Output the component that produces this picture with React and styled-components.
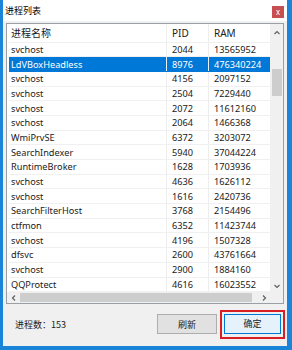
import React from "react";
import styled, { createGlobalStyle } from "styled-components";

const GlobalStyle = createGlobalStyle`
  html, body {
    margin: 0;
    padding: 0;
    background: #1a84d8;
  }
  body {
    font-family: "Noto Sans", "Noto Sans CJK SC", sans-serif;
  }
`;

const Window = styled.div`
  margin-left: 3px;
  width: 284px;
  height: 346px;
  background: #f0f0f0;
  display: flex;
  flex-direction: column;
  box-sizing: border-box;
`;

const TitleBar = styled.div`
  height: 21px;
  background: #ffffff;
  display: flex;
  align-items: center;
  justify-content: space-between;
  padding-left: 2px;
  padding-right: 3px;
  font-family: "Noto Sans CJK SC", sans-serif;
  font-size: 9px;
  color: #000;
`;

const CloseButton = styled.div`
  width: 12px;
  height: 12px;
  margin-top: 3px;
  background: #c74f4f;
  color: #fff;
  font-size: 8px;
  line-height: 11px;
  text-align: center;
`;

const Body = styled.div`
  padding: 2px 3px 0 3px;
`;

const ListFrame = styled.div`
  height: 281px;
  border: 1px solid #9a9fa6;
  background: #fff;
  display: grid;
  grid-template-columns: 1fr 13px;
  grid-template-rows: 1fr 11px;
  box-sizing: border-box;
`;

const Table = styled.div`
  overflow: hidden;
  padding-left: 2px;
`;

const Row = styled.div`
  display: grid;
  grid-template-columns: 157px 42px 1fr;
  height: ${(p) => (p.header ? "18.5px" : "14.7px")};
  font-size: ${(p) => (p.header ? "10px" : "9.2px")};
  font-family: "Noto Sans", "Noto Sans CJK SC", sans-serif;
  background: ${(p) => (p.selected ? "#0078d7" : "#fff")};
  color: ${(p) => (p.selected ? "#fff" : "#1a1a1a")};
  box-sizing: border-box;
  border-bottom: 1px solid ${(p) => (p.selected ? "#0078d7" : "#f0f0f0")};
`;

const Cell = styled.div`
  display: flex;
  align-items: center;
  padding-left: ${(p) => (p.first ? "2px" : "5px")};
  border-left: ${(p) => (p.first ? "none" : "1px solid")};
  border-color: ${(p) => (p.selected ? "#e6f0fa" : "#ededed")};
  white-space: nowrap;
  overflow: hidden;
`;

const VScroll = styled.div`
  background: #f0f0f0;
  display: flex;
  flex-direction: column;
  align-items: center;
`;

const Arrow = styled.div`
  height: ${(p) => p.size || 13}px;
  width: 13px;
  display: flex;
  align-items: center;
  justify-content: center;
  color: #606060;
`;

const VTrack = styled.div`
  flex: 1;
  width: 100%;
  position: relative;
`;

const VThumb = styled.div`
  position: absolute;
  left: 2px;
  right: 1px;
  top: 28px;
  height: 27px;
  background: #cdcdcd;
`;

const HScroll = styled.div`
  background: #f0f0f0;
  display: flex;
  align-items: center;
`;

const HTrack = styled.div`
  flex: 1;
  height: 100%;
  display: flex;
  align-items: center;
  padding: 0 0 0 0;
`;

const HThumb = styled.div`
  margin-left: 0;
  width: 232px;
  height: 9px;
  background: #cdcdcd;
`;

const Corner = styled.div`
  background: #f0f0f0;
`;

const Footer = styled.div`
  flex: 1;
  display: flex;
  align-items: center;
  padding: 0 2px 2px 12px;
`;

const Count = styled.div`
  flex: 1;
  font-family: "Noto Sans CJK SC", sans-serif;
  font-size: 9px;
  color: #1a1a1a;
`;

const Button = styled.div`
  width: ${(p) => p.width}px;
  height: 20px;
  box-sizing: border-box;
  border: 1px solid ${(p) => (p.primary ? "#0078d7" : "#adadad")};
  background: ${(p) => (p.primary ? "#e5f1fb" : "#e1e1e1")};
  display: flex;
  align-items: center;
  justify-content: center;
  font-family: "Noto Sans CJK SC", sans-serif;
  font-size: 9px;
  color: #1a1a1a;
`;

const Highlight = styled.div`
  margin-left: 3px;
  border: 2px solid #d81e22;
  padding: 2px 2px 3px 2px;
`;

const Chevron = ({ dir }) => {
  const paths = {
    up: "M1.5 5 L4 2.5 L6.5 5",
    down: "M1.5 3 L4 5.5 L6.5 3",
    left: "M5 1.5 L2.5 4 L5 6.5",
    right: "M3 1.5 L5.5 4 L3 6.5",
  };
  return (
    <svg width="8" height="8" viewBox="0 0 8 8">
      <path d={paths[dir]} fill="none" stroke="#606060" strokeWidth="1.2" />
    </svg>
  );
};

const processes = [
  ["svchost", 2044, 13565952],
  ["LdVBoxHeadless", 8976, 476340224],
  ["svchost", 4156, 2097152],
  ["svchost", 2504, 7229440],
  ["svchost", 2072, 11612160],
  ["svchost", 2064, 1466368],
  ["WmiPrvSE", 6372, 3203072],
  ["SearchIndexer", 5940, 37044224],
  ["RuntimeBroker", 1628, 1703936],
  ["svchost", 4636, 1626112],
  ["svchost", 1616, 2420736],
  ["SearchFilterHost", 3768, 2154496],
  ["ctfmon", 6352, 11423744],
  ["svchost", 4196, 1507328],
  ["dfsvc", 2600, 43761664],
  ["svchost", 2900, 1884160],
  ["QQProtect", 4616, 16023552],
];

const App = () => {
  const selected = 1;
  return (
    <>
      <GlobalStyle />
      <Window>
        <TitleBar>
          <span>进程列表</span>
          <CloseButton>x</CloseButton>
        </TitleBar>
        <Body>
          <ListFrame>
            <Table>
              <Row header>
                <Cell first>进程名称</Cell>
                <Cell>PID</Cell>
                <Cell>RAM</Cell>
              </Row>
              {processes.map(([name, pid, ram], i) => (
                <Row key={i} selected={i === selected}>
                  <Cell first selected={i === selected}>{name}</Cell>
                  <Cell selected={i === selected}>{pid}</Cell>
                  <Cell selected={i === selected}>{ram}</Cell>
                </Row>
              ))}
            </Table>
            <VScroll>
              <Arrow size={17}><Chevron dir="up" /></Arrow>
              <VTrack>
                <VThumb />
              </VTrack>
              <Arrow size={13}><Chevron dir="down" /></Arrow>
            </VScroll>
            <HScroll>
              <Arrow size={11}><Chevron dir="left" /></Arrow>
              <HTrack>
                <HThumb />
              </HTrack>
              <Arrow size={11}><Chevron dir="right" /></Arrow>
            </HScroll>
            <Corner />
          </ListFrame>
        </Body>
        <Footer>
          <Count>进程数：153</Count>
          <Button width={60}>刷新</Button>
          <Highlight>
            <Button width={57} primary>确定</Button>
          </Highlight>
        </Footer>
      </Window>
    </>
  );
};

export default App;
